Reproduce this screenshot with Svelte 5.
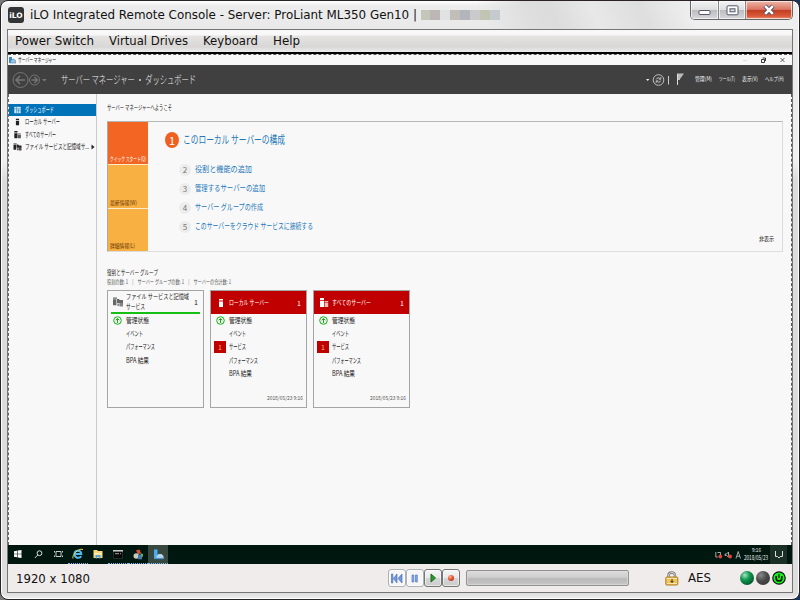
<script>
  const menus = [
    { text: 'Power Switch', width: 79 },
    { text: 'Virtual Drives', width: 79 },
    { text: 'Keyboard', width: 55 },
    { text: 'Help', width: 27 }
  ];

  const mosaic = ['#c3c6b8', '#bcb6b5', '#e0e2e4', '#c1bdb8', '#b3b5bc', '#cacaca', '#c3c5b4', '#c4cacd'];

  const navItems = [
    { text: 'ダッシュボード', width: 29, icon: 'dashboard', active: true },
    { text: 'ローカル サーバー', width: 35, icon: 'server' },
    { text: 'すべてのサーバー', width: 31, icon: 'servers' },
    { text: 'ファイル サービスと記憶域サ...', width: 64, icon: 'files', more: true }
  ];

  const tools = [
    { text: '管理(M)', width: 17 },
    { text: 'ツール(T)', width: 16 },
    { text: '表示(V)', width: 16 },
    { text: 'ヘルプ(H)', width: 19 }
  ];

  const steps = [
    { n: 2, text: '役割と機能の追加', width: 57 },
    { n: 3, text: '管理するサーバーの追加', width: 70 },
    { n: 4, text: 'サーバー グループの作成', width: 68 },
    { n: 5, text: 'このサーバーをクラウド サービスに接続する', width: 118 }
  ];

  const status = { text: '管理状態', width: 23, ok: true };
  const events = { text: 'イベント', width: 17 };
  const services = { text: 'サービス', width: 17, alert: 1 };
  const perf = { text: 'パフォーマンス', width: 29 };
  const bpa = { text: 'BPA 結果', width: 23 };

  const cards = [
    { title: [['ファイル サービスと記憶域', 63], ['サービス', 19]], icon: 'files', rows: [status, events, perf, bpa] },
    { title: [['ローカル サーバー', 40]], icon: 'server', red: true, rows: [status, events, services, perf, bpa], date: '2018/05/23 9:16' },
    { title: [['すべてのサーバー', 39]], icon: 'servers', red: true, rows: [status, events, services, perf, bpa], date: '2018/05/23 9:16' }
  ];
</script>

<!-- text squeezed to a given width, like the scaled remote screen -->
{#snippet label(text, width, size)}
  <svg class="label" {width} height={size + 3}>
    <text x="0" y={size * 0.88 + 1} font-size={size} textLength={width} lengthAdjust="spacingAndGlyphs">{text}</text>
  </svg>
{/snippet}

{#snippet icon(name)}
  <svg class="icon" width="10" height="10" viewBox="0 0 10 10" fill="currentColor">
    {#if name === 'dashboard'}
      <path d="M1 1h8v8H1z" opacity=".85" />
      <path d="M1 3.5h8M3.7 1v8M6.3 3.5v5.5M3.7 6h5.3" stroke="#0072b8" stroke-width=".6" />
    {:else if name === 'server'}
      <path d="M3 1h4v1.5H3zM3 3.5h4V9H3z" />
    {:else if name === 'servers'}
      <path d="M1 0h4v2H1zM1 2.7h4V9H1z" />
      <path d="M5.6 3h3.6v1.5H5.6zM5.6 5h3.6v4H5.6z" opacity=".75" />
    {:else}
      <path d="M0 .5h4v1.2H0zM0 2.3h3.4v6H0zM4 2h2l.7 1H10v3H4z" />
      <path d="M4.4 6.5h1.8V9H4.4zM6.6 5.5H10v4H6.6z" opacity=".8" />
    {/if}
  </svg>
{/snippet}

<div class="desktop">
  <div class="window">
    <header class="titlebar">
      <div class="ilo">iLO</div>
      {@render label('iLO Integrated Remote Console - Server: ProLiant ML350 Gen10 |', 387, 13)}
      <div class="mosaic">
        {#each mosaic as color}
          <i style:background={color}></i>
        {/each}
      </div>
      <div class="controls">
        <span class="min"><svg width="14" height="8"><rect x="1" y="1.5" width="11" height="4" rx="1" fill="#fff" stroke="#53566c" /></svg></span>
        <span class="max"><svg width="13" height="11"><rect x="1" y=".8" width="11" height="9" rx="1" fill="#fff" stroke="#53566c" /><rect x="4" y="3.8" width="5" height="3" fill="#d9dce2" stroke="#53566c" /></svg></span>
        <span class="close"><svg width="14" height="12" viewBox="0 0 14 12"><path d="M3 2l8 8M11 2l-8 8" stroke="#515469" stroke-width="4.5" /><path d="M3.2 2.2l7.6 7.6M10.8 2.2l-7.6 7.6" stroke="#fff" stroke-width="2.5" /></svg></span>
      </div>
    </header>

    <div class="client">
      <nav class="menubar">
        {#each menus as m}
          {@render label(m.text, m.width, 12.5)}
        {/each}
      </nav>

      <div class="remote">
        <div class="sm-title">
          <svg width="7" height="8"><path d="M0 1h3v6H0z" fill="#3c8ac8" /><path d="M2 4l3-1 2 2v2H1z" fill="#9cc4e4" stroke="#3675a8" stroke-width=".5" /></svg>
          {@render label('サーバー マネージャー', 38, 6)}
          <span class="sm-controls">
            <svg width="45" height="8" fill="none" stroke="#222">
              <path d="M1 4.5h4" stroke="#ddd" />
              <path d="M19.5 3.5h3v3h-3zM20.5 2h3v3" stroke-width=".9" />
              <path d="M38.5 2l4 4M42.5 2l-4 4" stroke-width=".7" />
            </svg>
          </span>
        </div>

        <div class="banner">
          <svg class="arrows" width="38" height="20" fill="none" stroke="#777">
            <circle cx="8.5" cy="10" r="7.5" />
            <path d="M13 10H4.5M8 6l-4 4 4 4" stroke-width="1.5" />
            <circle cx="22.5" cy="10" r="5" />
            <path d="M19.5 10h5.5M22.5 7l3 3-3 3" stroke-width="1.3" />
            <path d="M30 9h4.5l-2.2 2.5z" fill="#777" stroke="none" />
          </svg>
          <div class="crumb">{@render label('サーバー マネージャー ・ ダッシュボード', 135, 11)}</div>
          <div class="tools">
            <svg width="43" height="18" fill="none" stroke="#ccc">
              <path d="M0 8h3.4L1.7 10z" fill="#eee" stroke="none" />
              <circle cx="12.5" cy="9" r="5.3" stroke-width=".9" />
              <path d="M10.2 8.4c.5-2 3.6-2 4.3-.4M14.8 9.6c-.5 2-3.6 2-4.3.4M14.8 6.2v2h-2M10.2 11.8v-2h2" stroke-width=".9" />
              <path d="M22.5 5v8.5" />
              <path d="M31 2.5h7L34 8v1h-2v5h-1z" fill="#bbb" stroke="none" />
              <path d="M31.5 3v10.5" stroke="#ddd" />
            </svg>
            <div class="tool-names">
              {#each tools as t}
                {@render label(t.text, t.width, 5.5)}
              {/each}
            </div>
          </div>
        </div>

        <div class="body">
          <aside>
            {#each navItems as item}
              <div class="nav" class:active={item.active}>
                {@render icon(item.icon)}
                {@render label(item.text, item.width, 7)}
                {#if item.more}
                  <svg class="more" width="4" height="6"><path d="M.5 .5L3.5 3l-3 2.5z" fill="#222" /></svg>
                {/if}
              </div>
            {/each}
          </aside>

          <main>
            <div class="welcome">{@render label('サーバー マネージャーへようこそ', 65, 6.5)}</div>

            <section class="start">
              <div class="tiles">
                <div class="tile hot">{@render label('クイック スタート(Q)', 36, 6)}</div>
                <div class="tile">{@render label('最新情報(W)', 27, 6)}</div>
                <div class="tile">{@render label('詳細情報(L)', 25, 6)}</div>
              </div>
              <div class="steps">
                <div class="step first">
                  <b>1</b>
                  {@render label('このローカル サーバーの構成', 102, 11)}
                </div>
                {#each steps as s}
                  <div class="step">
                    <b>{s.n}</b>
                    {@render label(s.text, s.width, 8.5)}
                  </div>
                {/each}
              </div>
              <div class="hide">{@render label('非表示', 15, 6)}</div>
            </section>

            <div class="groups">
              {@render label('役割とサーバー グループ', 51, 6.5)}
              <div class="counts">{@render label('役割の数: 1　|　サーバー グループの数: 1　|　サーバーの合計数: 1', 124, 5.5)}</div>
            </div>

            <div class="cards">
              {#each cards as card}
                <article class="card" class:red={card.red}>
                  <div class="head">
                    {@render icon(card.icon)}
                    <div class="names">
                      {#each card.title as [line, width]}
                        {@render label(line, width, 6.5)}
                      {/each}
                    </div>
                    <span class="count">1</span>
                  </div>
                  <div class="rows">
                    {#each card.rows as row}
                      <div class="row">
                        <span class="mark">
                          {#if row.ok}
                            <svg width="9" height="9" fill="none" stroke="#12b212"><circle cx="4.5" cy="4.5" r="3.8" /><path d="M4.5 7V2.5M2.7 4.3l1.8-1.8 1.8 1.8" /></svg>
                          {:else if row.alert}
                            <i class="alert">{row.alert}</i>
                          {/if}
                        </span>
                        {@render label(row.text, row.width, 7)}
                      </div>
                    {/each}
                  </div>
                  {#if card.date}
                    <div class="date">{@render label(card.date, 36, 5.5)}</div>
                  {/if}
                </article>
              {/each}
            </div>
          </main>
        </div>

        <footer class="taskbar">
          <span class="task"><svg width="8" height="8" fill="#fff"><path d="M0 1.2l3-.5v3H0zM3.6.6L7.5 0v3.7H3.6zM0 4.3h3v3l-3-.5zM3.6 4.3h3.9V8l-3.9-.6z" /></svg></span>
          <span class="task"><svg width="9" height="9" fill="none" stroke="#ddd"><circle cx="5.5" cy="3.2" r="2.4" /><path d="M3.8 5L.8 8" /></svg></span>
          <span class="task"><svg width="9" height="8" fill="none" stroke="#ccc"><path d="M2 1.5h5v5H2zM.5 1v1.5M.5 5.5V7M8.5 1v1.5M8.5 5.5V7" /></svg></span>
          <span class="task run">
            <svg width="12" height="12" fill="none"><path d="M9.3 8.3C7.5 11 2.5 10 2.5 6S8.8 1.5 9.3 6H3" stroke="#4dbbf0" stroke-width="2" /><path d="M1 10.5C-.5 8 6-.5 11 1.5" stroke="#f2d04b" stroke-width="1" /></svg>
          </span>
          <span class="task"><svg width="10" height="10"><path d="M.5 1h3.5l1 1h4.5v7h-9z" fill="#f5d779" /><path d="M1 4h8v1.5H1z" fill="#fff0b8" /><path d="M2.5 6h5v3.5H6V8H4v1.5H2.5z" fill="#54a7dc" /></svg></span>
          <span class="task run"><svg width="10" height="9"><path d="M.5 .5h9v8h-9z" fill="#080808" stroke="#39403c" stroke-width=".6" /><path d="M0 .8h10" stroke="#ddd" stroke-width="1.4" /><path d="M2 3.7h4M7 3.7h1" stroke="#ccc" stroke-width=".8" /></svg></span>
          <span class="task run"><svg width="11" height="11"><path d="M3 1.2L6.5.5 8 4 5 5.5z" fill="#db4e3e" /><circle cx="3.3" cy="7" r="2.8" fill="#c9c9bd" /><path d="M5 5.5h4v4.8H5z" fill="#4678a7" /><path d="M7.5 4l2.5 1v3l-2-.5z" fill="#64a75f" /></svg></span>
          <span class="task run active"><svg width="11" height="11"><path d="M1 .5h3.5v9H1z" fill="#48aef0" /><path d="M3.5 7l2-2h3l2 2v3h-7z" fill="#b9d4e6" /><path d="M1 9.5h9.5" stroke="#3c96d8" stroke-width="1.2" /></svg></span>

          <div class="tray">
            <svg width="27" height="10" fill="none" stroke="#ccc" stroke-width=".8">
              <path d="M.8 2v5h2M2.5 2.5h3v4" /><circle cx="5.3" cy="6.5" r="1.9" fill="#e44040" stroke="none" />
              <path d="M10 4h1.5L13.5 2v5l-2-1.5H10z" /><circle cx="15" cy="6.5" r="1.9" fill="#e44040" stroke="none" />
              <path d="M21 8.5L23.2 1.5 25.5 8.5M21.8 6.2h3" />
            </svg>
            <div class="clock">
              {@render label('9:16', 9, 5.5)}
              {@render label('2018/05/23', 24, 6)}
            </div>
            <span class="note"><svg width="8" height="9" fill="none" stroke="#ddd"><path d="M.5 1v5.5h2L4 8l1.2-1.5h2.3V1" /></svg></span>
          </div>
        </footer>
      </div>

      <div class="statusbar">
        <div class="res">{@render label('1920 x 1080', 74, 12)}</div>
        <div class="player">
          <span class="soft"><svg width="12" height="11" fill="#7399dd" stroke="#4165b2" stroke-width=".6"><path d="M.5 1h1.3v9H.5zM6 1L2.3 5.5 6 10zM11 1L7 5.5l4 4.5z" /></svg></span>
          <span class="soft"><svg width="8" height="9" fill="#86a5ea" stroke="#5878cb" stroke-width=".7"><path d="M1 1h1.8v7H1zM4.5 1h1.8v7H4.5z" /></svg></span>
          <span><svg width="7" height="10"><path d="M1 1l4.5 4L1 9z" fill="#2d9630" stroke="#166d1c" /></svg></span>
          <span><i class="rec"></i></span>
        </div>
        <div class="progress"></div>
        <div class="secure">
          <svg width="14" height="15">
            <path d="M3.5 7V4.5c0-4 6.5-4 6.5 0V7" fill="none" stroke="#777" stroke-width="2.4" />
            <path d="M3.5 7V4.5c0-4 6.5-4 6.5 0V7" fill="none" stroke="#e0e0da" stroke-width="1" />
            <rect x=".8" y="6" width="12" height="8" rx="1" fill="#efc45b" stroke="#ab7a27" />
            <path d="M1.5 7.5h10.5M2 12.5h10" stroke="#fae6a4" />
            <path d="M7 8v4M5.5 10.5h3" stroke="#5b441c" stroke-width="1.2" />
          </svg>
          {@render label('AES', 23, 12.5)}
        </div>
        <div class="lamps">
          <i class="green"></i>
          <i class="gray"></i>
          <svg width="14" height="14"><circle cx="7" cy="7" r="6.2" fill="#1cf01c" stroke="#111" stroke-width="1.2" /><path d="M4.2 5v2.2a2.8 2.8 0 0 0 5.6 0V5" fill="none" stroke="#071b07" stroke-width="1.7" /><path d="M7 3v4" stroke="#071b07" stroke-width="1.2" /></svg>
        </div>
      </div>
    </div>
  </div>
</div>

<style>
  :global(body) {
    overflow: hidden;
    font-family: "DejaVu Sans", "Noto Sans CJK JP", sans-serif;
  }

  * {
    box-sizing: border-box;
  }

  svg {
    display: block;
    flex: none;
  }

  .label {
    fill: currentColor;
    overflow: visible;
  }

  .desktop {
    width: 800px;
    height: 600px;
    background: linear-gradient(90deg, #77797c 0, #777 30%, #17365c);
  }

  .window {
    width: 800px;
    height: 600px;
    padding: 0 6px;
    border: 1px solid #292327;
    border-radius: 8px;
    background: linear-gradient(#fff 0, #ececec 5px, #e9e9e9 30px, #f0f0f0 160px, #dcdcdc 180px, #ddd 592px, #eee 100%);
    box-shadow: inset 0 0 0 1px #fff;
  }

  .titlebar {
    display: flex;
    align-items: flex-start;
    height: 28px;
    margin: 0 -5px;
    padding: 6px 5px 0 6px;
    background: linear-gradient(65deg, #fff0 0 60%, #dedede 66%, #dcdcdc 69%, #e8e8e8 74%, #dedede 80%, #eee 86%);
    border-radius: 8px 8px 0 0;
    color: #111;
  }

  .ilo {
    width: 16px;
    height: 16px;
    margin-right: 6px;
    border-radius: 3px;
    background: #333436;
    color: #fff;
    font: bold 7.5px/17px "DejaVu Sans", sans-serif;
    text-align: center;
  }

  .mosaic {
    display: flex;
    height: 10px;
    margin: 3px 0 0 4px;
  }

  .mosaic i {
    width: 10px;
  }

  .mosaic i:first-child {
    width: 9px;
  }

  .controls {
    display: flex;
    height: 19px;
    margin: -6px 0 0 auto;
    border: 1px solid #63656b;
    border-top: 0;
    border-radius: 0 0 5px 5px;
    overflow: hidden;
  }

  .controls span {
    display: flex;
    align-items: center;
    justify-content: center;
    width: 27px;
    background: linear-gradient(#f3f3f3, #dedede 48%, #bcbcbf 50%, #d8d8da);
    box-shadow: inset 0 0 0 1px #ffffffa0;
  }

  .controls .min {
    padding-top: 5px;
  }

  .controls .max {
    border-left: 1px solid #84868a;
    border-right: 1px solid #84868a;
    width: 28px;
  }

  .controls .close {
    width: 46px;
    background: linear-gradient(#edb8a9, #db7462 47%, #c13c20 50%, #da5a3b 85%, #e79b7d);
  }

  .client {
    width: 786px;
    height: 564px;
    border: 1px solid #757575;
    background: #f0ecec;
  }

  .menubar {
    display: flex;
    gap: 15px;
    height: 22px;
    padding: 3px 7px;
    background: linear-gradient(#f8f8f8 0 5px, #e6e4e3 6px, #d9d7d6 17px, #eee);
    color: #111;
  }

  .remote {
    height: 512px;
    border-top: 2px solid #000;
    background: #f8f8f8;
    color: #222;
    font-family: "Noto Sans CJK JP", sans-serif;
  }

  .sm-title {
    display: flex;
    align-items: center;
    gap: 2px;
    height: 11px;
    border-top: 1px dashed #555;
    padding-left: 1px;
  }

  .sm-controls {
    margin-left: auto;
    padding-right: 5px;
  }

  .banner {
    display: flex;
    align-items: center;
    height: 29px;
    padding: 0 8px 0 4px;
    background: #404040;
    color: #f2f2f2;
  }

  .crumb {
    margin-left: 11px;
    font-weight: 300;
  }

  .tools {
    display: flex;
    align-items: center;
    gap: 6px;
    margin-left: auto;
  }

  .tool-names {
    display: flex;
    gap: 7px;
  }

  .body {
    display: flex;
    height: 451px;
  }

  aside {
    width: 89px;
    padding-top: 10px;
    border-right: 1px solid #c9c9c9;
    border-left: 1px dashed #666;
  }

  .nav {
    display: flex;
    align-items: center;
    gap: 3px;
    height: 12.3px;
    padding-left: 4px;
  }

  .nav.active {
    background: #0072b8;
    color: #fff;
  }

  .nav .icon {
    width: 9px;
    height: 8px;
  }

  .nav .more {
    margin-left: -1px;
  }

  main {
    flex: 1;
    padding: 9px 8px 0 10px;
    border-right: 1px dashed #555;
  }

  .welcome {
    height: 18px;
  }

  .start {
    display: flex;
    height: 131px;
    border: 1px solid #dcdcdc;
    border-top-color: #b5b8b7;
    border-left-color: #aaa;
  }

  .tiles {
    display: grid;
    grid-template-rows: 42px 43px 42px;
    gap: 1px;
    width: 40px;
    background: #fbead0;
  }

  .tile {
    display: flex;
    align-items: flex-end;
    padding-left: 2px;
    background: #f8b042;
    color: #6b3a08;
  }

  .tile.hot {
    background: #f26522;
    color: #fff;
  }

  .steps {
    padding: 9px 0 0 31px;
    color: #2578b8;
  }

  .step {
    display: flex;
    align-items: center;
    gap: 4px;
    height: 19px;
  }

  .step b {
    width: 12px;
    height: 12px;
    border-radius: 50%;
    background: #ececec;
    color: #777;
    font-size: 8px;
    font-weight: 400;
    line-height: 12px;
    text-align: center;
  }

  .step.first {
    height: 18px;
    margin: 0 0 11px -14px;
  }

  .step.first b {
    width: 14px;
    height: 16px;
    background: #f15f20;
    color: #fff;
    font-size: 11px;
    line-height: 16px;
  }

  .hide {
    align-self: flex-end;
    margin: 0 8px 7px auto;
  }

  .groups {
    height: 38px;
    padding-top: 16px;
  }

  .counts {
    color: #555;
  }

  .cards {
    display: flex;
    gap: 6px;
  }

  .card {
    position: relative;
    width: 97px;
    height: 118px;
    border: 1px solid #a5a5a5;
  }

  .head {
    display: flex;
    align-items: center;
    height: 23px;
    margin: 0 3px;
    padding: 0 2px;
    border-bottom: 2px solid #14c014;
  }

  .head .icon {
    color: #666;
  }

  .red .head {
    margin: 0;
    padding: 0 5px;
    border: 0;
    background: #c00000;
    color: #fff;
  }

  .red .head .icon {
    color: #fff;
  }

  .names {
    margin-left: 3px;
  }

  .count {
    margin-left: auto;
    font-size: 7px;
    line-height: 8px;
  }

  .row {
    display: flex;
    align-items: center;
    height: 13.3px;
  }

  .mark {
    display: flex;
    justify-content: center;
    width: 18px;
  }

  .alert {
    width: 12px;
    height: 12px;
    background: #c00000;
    color: #f6c45c;
    font: 7px/12px "Noto Sans CJK JP", sans-serif;
    text-align: center;
  }

  .date {
    position: absolute;
    right: 3px;
    bottom: 5px;
    color: #555;
  }

  .taskbar {
    display: flex;
    height: 19px;
    background: #00170f;
    color: #eee;
  }

  .task {
    display: flex;
    align-items: center;
    justify-content: center;
    width: 20px;
    border-bottom: 1px solid transparent;
  }

  .run {
    border-bottom: 1px dotted #76b9ed;
  }

  .task.active {
    background: #39483f;
  }

  .tray {
    display: flex;
    align-items: center;
    gap: 2px;
    margin-left: auto;
    padding-right: 5px;
  }

  .clock {
    display: flex;
    flex-direction: column;
    align-items: center;
  }

  .note {
    display: grid;
    place-items: center;
    width: 17px;
    height: 19px;
    background: #1a3027;
  }

  .statusbar {
    display: flex;
    align-items: center;
    height: 28px;
    padding: 0 6px 0 8px;
    color: #111;
  }

  .player {
    display: flex;
    margin-left: 298px;
  }

  .player span {
    display: grid;
    place-items: center;
    width: 18px;
    height: 18px;
    border: 1px solid #747777;
    border-radius: 3px;
    background: linear-gradient(#f5f5f5, #e9e9e9 48%, #d6d6d6 50%, #ccc);
    box-shadow: inset 0 0 0 1px #fff8;
  }

  .player .soft {
    border-color: #adb2b5;
    background: #f6f6f6;
  }

  .rec {
    width: 6px;
    height: 6px;
    border-radius: 50%;
    background: radial-gradient(circle at 35% 30%, #ffb99b, #df4c2b 50%, #a32b18);
  }

  .progress {
    width: 163px;
    height: 16px;
    margin-left: 6px;
    border: 1px solid #929292;
    border-radius: 2px;
    background: linear-gradient(#ddd, #cecece 45%, #b9b9b9 55%, #c7c7c7);
    box-shadow: inset 0 0 0 1px #ddd9;
  }

  .secure {
    display: flex;
    align-items: center;
    gap: 9px;
    margin-left: 36px;
  }

  .lamps {
    display: flex;
    align-items: center;
    gap: 2px;
    margin-left: auto;
  }

  .lamps i {
    width: 14px;
    height: 14px;
    border-radius: 50%;
  }

  .lamps .green {
    background: radial-gradient(circle at 35% 30%, #a8e4c0, #159852 35%, #036b35 65%, #023b1c);
  }

  .lamps .gray {
    background: radial-gradient(circle at 35% 30%, #888, #4a4a4a 45%, #303030);
  }
</style>
